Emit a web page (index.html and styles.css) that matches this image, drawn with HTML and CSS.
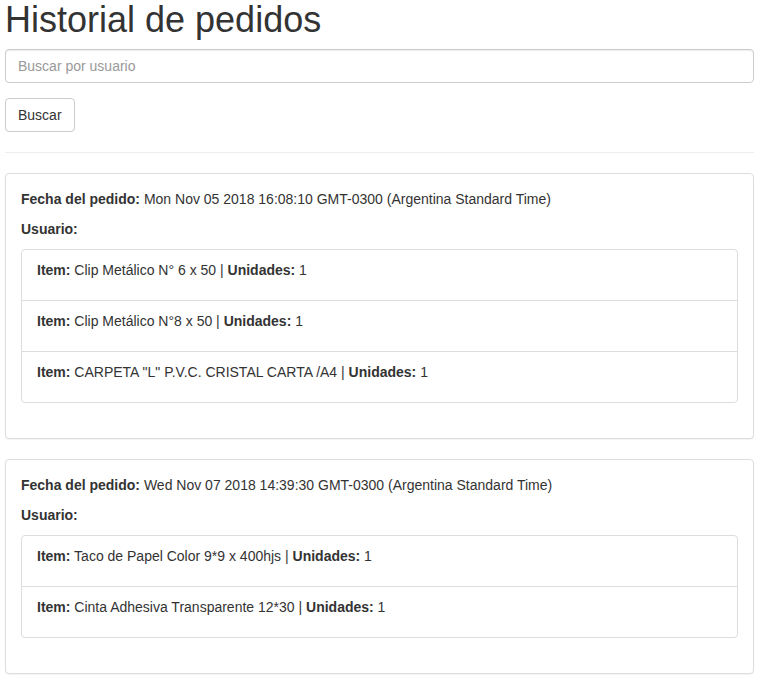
FILE: index.html
```html
<!DOCTYPE html>
<html lang="es">
<head>
<meta charset="utf-8">
<title>Historial de pedidos</title>
<link rel="stylesheet" href="styles.css">
</head>
<body>
<div class="container">
  <h1 class="title">Historial de pedidos</h1>
  <div class="form-group">
    <input class="form-control" type="text" placeholder="Buscar por usuario">
  </div>
  <button class="btn" type="button">Buscar</button>
  <hr class="divider">

  <div class="panel">
    <div class="panel-body">
      <p><strong>Fecha del pedido:</strong> Mon Nov 05 2018 16:08:10 GMT-0300 (Argentina Standard Time)</p>
      <p><strong>Usuario:</strong></p>
      <ul class="list-group">
        <li class="list-group-item"><p><strong>Item:</strong> Clip Metálico N° 6 x 50 | <strong>Unidades:</strong> 1</p></li>
        <li class="list-group-item"><p><strong>Item:</strong> Clip Metálico N°8 x 50 | <strong>Unidades:</strong> 1</p></li>
        <li class="list-group-item"><p><strong>Item:</strong> CARPETA "L" P.V.C. CRISTAL CARTA /A4 | <strong>Unidades:</strong> 1</p></li>
      </ul>
    </div>
  </div>

  <div class="panel">
    <div class="panel-body">
      <p><strong>Fecha del pedido:</strong> Wed Nov 07 2018 14:39:30 GMT-0300 (Argentina Standard Time)</p>
      <p><strong>Usuario:</strong></p>
      <ul class="list-group">
        <li class="list-group-item"><p><strong>Item:</strong> Taco de Papel Color 9*9 x 400hjs | <strong>Unidades:</strong> 1</p></li>
        <li class="list-group-item"><p><strong>Item:</strong> Cinta Adhesiva Transparente 12*30 | <strong>Unidades:</strong> 1</p></li>
      </ul>
    </div>
  </div>
</div>
</body>
</html>
```

FILE: styles.css
```css
* { box-sizing: border-box; }
html, body { margin: 0; padding: 0; background: #fff; }
body {
  font-family: "Liberation Sans", Arial, Helvetica, sans-serif;
  font-size: 14px;
  line-height: 20px;
  color: #333;
}
.container {
  padding: 0 17px 0 5px;
}
.title {
  font-size: 36px;
  font-weight: 500;
  line-height: 40px;
  margin: 0 0 9px;
  color: #333;
}
.form-group { margin-bottom: 15px; }
.form-control {
  display: block;
  width: 100%;
  height: 34px;
  padding: 6px 12px;
  font-family: inherit;
  font-size: 14px;
  line-height: 20px;
  color: #555;
  background: #fff;
  border: 1px solid #ccc;
  border-radius: 4px;
  box-shadow: inset 0 1px 1px rgba(0,0,0,.075);
  outline: none;
}
.form-control::placeholder { color: #999; }
.btn {
  display: inline-block;
  height: 34px;
  padding: 6px 12px;
  font-family: inherit;
  font-size: 14px;
  line-height: 20px;
  color: #333;
  background: #fff;
  border: 1px solid #ccc;
  border-radius: 4px;
  vertical-align: top;
}
.divider {
  margin: 20px 0;
  border: 0;
  border-top: 1px solid #eee;
}
.panel {
  margin-bottom: 20px;
  background: #fff;
  border: 1px solid #ddd;
  border-radius: 4px;
  box-shadow: 0 1px 1px rgba(0,0,0,.05);
}
.panel-body { padding: 15px; }
.panel-body p { margin: 0 0 10px; }
strong { font-weight: bold; }
.list-group {
  list-style: none;
  margin: 0 0 20px;
  padding: 0;
}
.list-group-item {
  display: block;
  padding: 10px 15px;
  margin-bottom: -1px;
  background: #fff;
  border: 1px solid #ddd;
}
.list-group-item:first-child {
  border-top-left-radius: 4px;
  border-top-right-radius: 4px;
}
.list-group-item:last-child {
  margin-bottom: 0;
  border-bottom-left-radius: 4px;
  border-bottom-right-radius: 4px;
}
```
